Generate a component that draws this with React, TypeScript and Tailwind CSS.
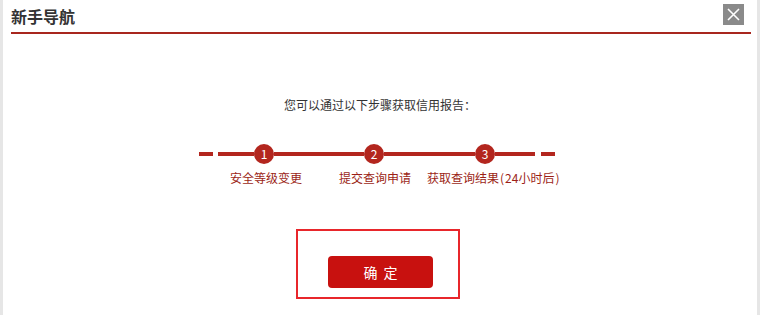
import React from "react";

const font = { fontFamily: '"Noto Sans CJK SC", "Noto Sans", sans-serif' };

function Circle({ n }: { n: number }) {
  return (
    <div className="w-[20px] h-[20px] rounded-full bg-[#b3261e] flex items-center justify-center text-white text-[12px] leading-none shrink-0">
      {n}
    </div>
  );
}

export default function App() {
  return (
    <div
      className="w-[760px] h-[315px] bg-white border-l-[3px] border-r-[3px] border-[#e6e6e6] flex flex-col"
      style={font}
    >
      <div className="h-[32px] flex items-start justify-between pl-[8px] pr-[13px]">
        <div className="mt-[6px] text-[16px] leading-[20px] font-bold text-[#333]">新手导航</div>
        <div className="mt-[4px] w-[21px] h-[21px] bg-[#8a8a8a] flex items-center justify-center">
          <svg width="13" height="13" viewBox="0 0 13 13">
            <path d="M1 1 L12 12 M12 1 L1 12" stroke="#fff" strokeWidth="1.6" />
          </svg>
        </div>
      </div>
      <div className="ml-[8px] mr-[6px] h-[2px] bg-[#a8261e]" />

      <div className="mt-[63px] text-center text-[12px] leading-[16px] text-[#333]">
        您可以通过以下步骤获取信用报告：
      </div>

      <div className="mt-[31px] flex items-center pl-[196px] h-[20px]">
        <div className="w-[14px] h-[4px] bg-[#b3261e]" />
        <div className="w-[5px]" />
        <div className="w-[36px] h-[4px] bg-[#b3261e]" />
        <Circle n={1} />
        <div className="w-[90px] h-[4px] bg-[#b3261e]" />
        <Circle n={2} />
        <div className="w-[91px] h-[4px] bg-[#b3261e]" />
        <Circle n={3} />
        <div className="w-[40px] h-[4px] bg-[#b3261e]" />
        <div className="w-[6px]" />
        <div className="w-[14px] h-[4px] bg-[#b3261e]" />
      </div>

      <div className="mt-[6px] flex pl-[227px] text-[12px] leading-[16px] text-[#9c1f17] whitespace-nowrap">
        <span>安全等级变更</span>
        <span className="ml-[37px]">提交查询申请</span>
        <span className="ml-[16px]">
          获取查询结果<span className="ml-[1px] mr-[1px]">(</span>24小时后<span className="ml-[1px]">)</span>
        </span>
      </div>

      <div className="mt-[43px] ml-[293px] w-[164px] h-[70px] border-2 border-[#e8262b] pl-[30px] pt-[25px]">
        <div className="w-[105px] h-[32px] rounded-[4px] bg-[#c8110f] text-white text-[14px] flex items-center justify-center tracking-[6px] pl-[6px]">
          确定
        </div>
      </div>
    </div>
  );
}
